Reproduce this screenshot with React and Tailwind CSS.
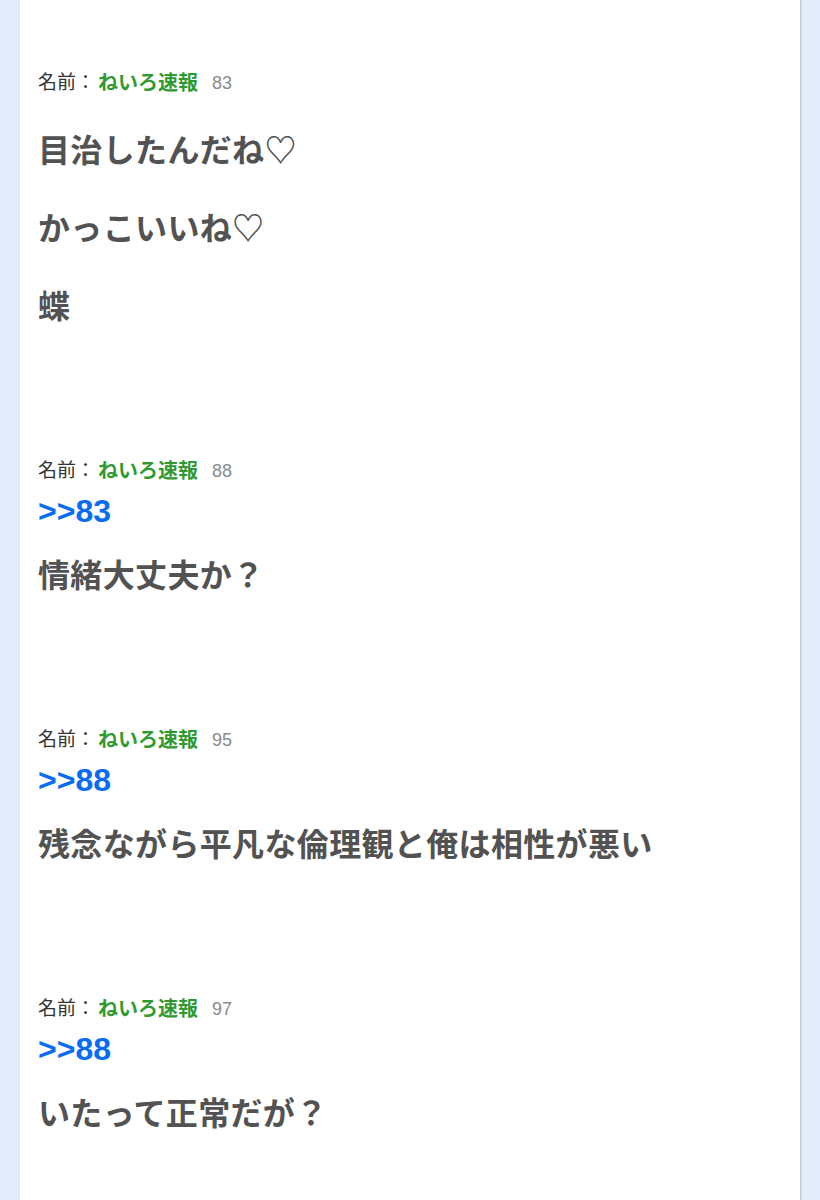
import React from "react";

const posts = [
  { no: 83, anchor: null, lines: ["目治したんだね♡", "かっこいいね♡", "蝶"] },
  { no: 88, anchor: ">>83", lines: ["情緒大丈夫か？"] },
  { no: 95, anchor: ">>88", lines: ["残念ながら平凡な倫理観と俺は相性が悪い"] },
  { no: 97, anchor: ">>88", lines: ["いたって正常だが？"] },
];

const font = {
  fontFamily: '"Liberation Sans", "Noto Sans CJK JP", sans-serif',
};

function Post({ p }) {
  return (
    <div>
      <div className="flex h-[24px] items-center text-[20px] leading-[24px] text-[#333333]">
        <span className="text-[19px]">名前：</span>
        <span className="ml-[3px] font-bold text-[#2f9a2f]">ねいろ速報</span>
        <span className="ml-[14px] text-[18px] text-[#8a8a8a]">{p.no}</span>
      </div>
      {p.anchor && (
        <div className="mt-[8px] h-[40px] text-[32px] font-bold leading-[40px] text-[#0a6cf0]">
          {p.anchor}
        </div>
      )}
      <div
        className={
          (p.anchor ? "mt-[25px]" : "mt-[36px]") +
          " flex flex-col gap-[38px] text-[32px] font-bold leading-[40px] tracking-[0.35px] text-[#525252]"
        }
      >
        {p.lines.map((l, i) => (
          <div key={i} className="h-[40px] whitespace-nowrap">
            {l}
          </div>
        ))}
      </div>
    </div>
  );
}

export default function App() {
  return (
    <div className="min-h-[1200px] bg-[#e4ecfb] px-[20px]" style={font}>
      <div className="flex min-h-[1200px] flex-col gap-[132px] bg-white pl-[18px] pt-[71px] shadow-[1px_0_2px_rgba(0,0,0,0.2)]">
        {posts.map((p) => (
          <Post key={p.no} p={p} />
        ))}
      </div>
    </div>
  );
}
